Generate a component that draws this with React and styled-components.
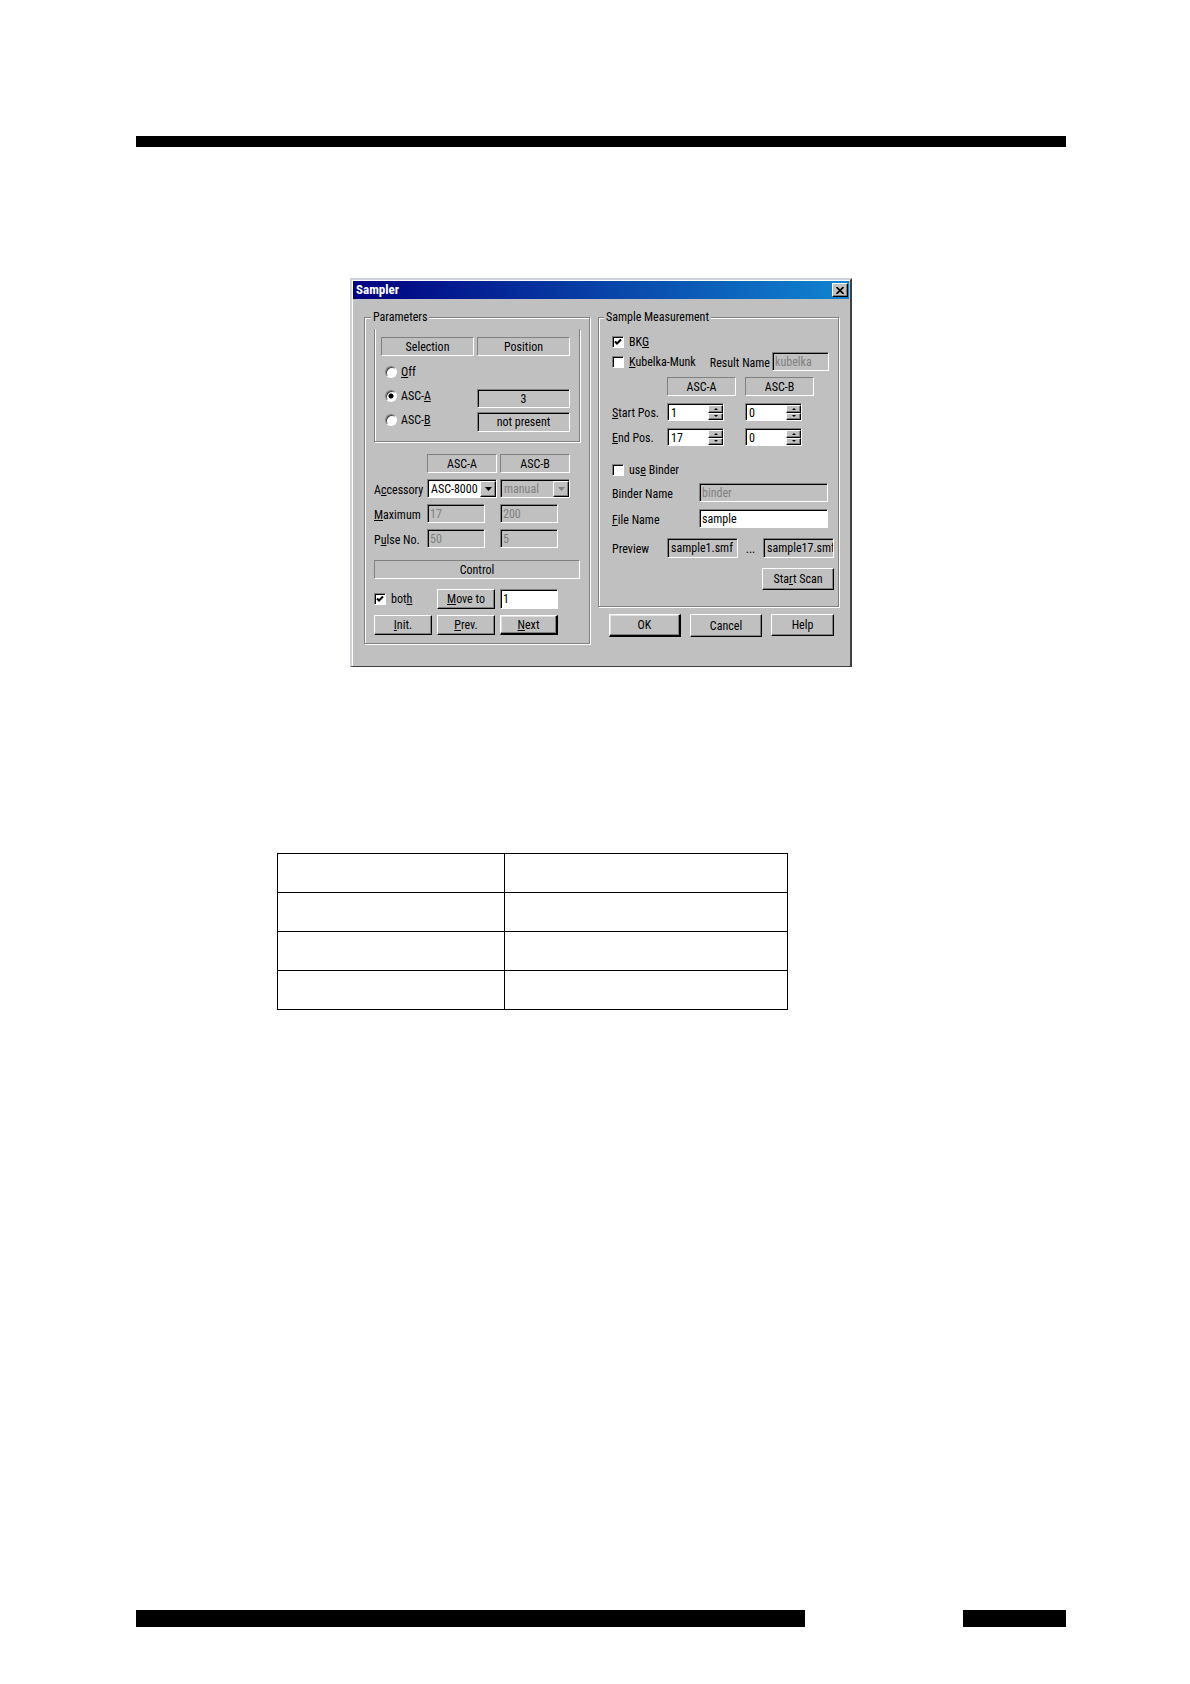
import React, { useId, useState } from "react";
import styled, { createGlobalStyle, css } from "styled-components";

const GlobalStyle = createGlobalStyle`
  *, *::before, *::after { box-sizing: border-box; }
  body { margin: 0; background: #fff; }
  button, input, select, output { font: inherit; color: inherit; margin: 0; border-radius: 0; }
`;

const face = "#c0c0c0";
const shade = "#808080";

const sunken = css`
  border: 1px solid;
  border-color: ${shade} #fff #fff ${shade};
  box-shadow: inset 1px 1px 0 #000;
`;

const raised = css`
  background: ${face};
  border: 1px solid;
  border-color: #fff #000 #000 #fff;
  box-shadow: inset -1px -1px 0 ${shade};
`;

/* ---------- page ---------- */

const Page = styled.div`
  min-height: 100vh;
  display: flex;
  flex-direction: column;
  padding: 136px 124px 57px 136px;
  background: #fff;
`;

const HeaderRule = styled.header`
  height: 11px;
  background: #000;
`;

const Content = styled.main`
  display: flex;
  flex-direction: column;
  padding: 131px 0 48px;
`;

const FooterRules = styled.footer`
  display: flex;
  gap: 158px;
  margin-top: auto;
`;

const FooterBar = styled.div`
  flex: ${(p) => (p.$short ? "0 0 103px" : "1")};
  height: 17px;
  background: #000;
`;

const Table = styled.table`
  width: 511px;
  margin: 186px 0 0 141px;
  border-collapse: collapse;
  table-layout: fixed;
`;

const Cell = styled.td`
  height: 39px;
  padding: 0;
  border: 1px solid #000;
`;

/* ---------- dialog ---------- */

const Dialog = styled.section`
  align-self: center;
  width: 502px;
  background: ${face};
  padding: 1px;
  border: solid;
  border-width: 2px 2px 1px;
  border-color: #d0d4d8 #404040 #404040 #d0d4d8;
  box-shadow: inset 1px 1px 0 #fff;
  font: 12px/14px "Liberation Sans Narrow", "Roboto Condensed", "Liberation Sans", Arial, sans-serif;
  color: #000;
`;

const TitleBar = styled.header`
  display: flex;
  align-items: center;
  justify-content: space-between;
  height: 18px;
  padding: 0 1px 0 3px;
  background: linear-gradient(90deg, #000080, #1084d0);
`;

const Title = styled.h1`
  margin: 0;
  font-size: 13px;
  line-height: 18px;
  font-weight: bold;
  color: #fff;
`;

const CloseButton = styled.button`
  ${raised}
  display: grid;
  place-items: center;
  width: 16px;
  height: 14px;
  padding: 0;
`;

const Body = styled.div`
  display: flex;
  gap: 8px;
  padding: 11px 10px 21px 11px;
`;

const LeftColumn = styled.div`
  flex: 0 0 226px;
`;

const RightColumn = styled.div`
  flex: 1;
  min-width: 0;
`;

const Group = styled.fieldset`
  min-width: 0;
  margin: 0;
  padding: ${(p) => p.$pad};
  border: 1px solid ${shade};
  box-shadow: 1px 1px 0 #fff, inset 1px 1px 0 #fff;
`;

const Legend = styled.legend`
  height: 14px;
  margin-left: ${(p) => p.$shift || 0};
  padding: 0 2px;
  background: ${face};
`;

const OpenFrame = styled.div`
  display: flex;
  gap: 3px;
  padding: 8px 9px 9px 6px;
  border: 1px solid ${shade};
  border-top: 0;
  box-shadow: 1px 1px 0 #fff, inset 1px 0 0 #fff;
`;

const FrameColumn = styled.div`
  flex: 1;
  display: flex;
  flex-direction: column;
`;

const Heading = styled.div`
  height: 19px;
  border: 1px solid;
  border-color: ${shade} #fff #fff ${shade};
  line-height: 18px;
  text-align: center;
`;

const RadioList = styled.div`
  padding: 4px 0 0 4px;
`;

const Choice = styled.label`
  display: flex;
  align-items: center;
  gap: ${(p) => p.$gap || "5px"};
  height: ${(p) => p.$height || "20px"};
`;

const Radio = styled.input`
  appearance: none;
  width: 12px;
  height: 12px;
  border: 1px solid;
  border-color: ${shade} #fff #fff ${shade};
  border-radius: 50%;
  background: #fff;
  box-shadow: inset 1px 1px 0 #404040;
  &:checked {
    background: radial-gradient(circle at 50% 50%, #000 0 2px, #fff 3px);
  }
`;

const Positions = styled.div`
  display: grid;
  gap: 4px;
  margin-top: 33px;
`;

const Readout = styled.output`
  ${sunken}
  display: block;
  height: ${(p) => p.$height || "19px"};
  padding: 0 3px;
  overflow: hidden;
  white-space: nowrap;
  line-height: 18px;
  text-align: ${(p) => p.$align || "left"};
`;

const AccessoryGrid = styled.div`
  display: grid;
  grid-template-columns: 50px 70px 70px;
  grid-auto-rows: 19px;
  column-gap: 3px;
  row-gap: 6px;
  margin: 12px 0;
`;

const Label = styled.label`
  align-self: center;
  padding-top: 2px;
  white-space: nowrap;
`;

const TextBox = styled.input`
  ${sunken}
  width: ${(p) => p.$width || "100%"};
  height: ${(p) => p.$height || "19px"};
  padding: 0 2px;
  background: #fff;
  outline: none;
  &:disabled {
    background: ${face};
    color: ${shade};
  }
`;

const SelectFrame = styled.span`
  ${sunken}
  display: flex;
  position: relative;
  height: 19px;
  background: ${(p) => (p.$disabled ? face : "#fff")};
  color: ${(p) => (p.$disabled ? shade : "#000")};
`;

const NativeSelect = styled.select`
  appearance: none;
  width: 100%;
  padding: 0 16px 0 3px;
  border: 0;
  background: transparent;
  outline: none;
  &:disabled {
    color: ${shade};
    opacity: 1;
  }
`;

const DropMark = styled.span`
  ${raised}
  position: absolute;
  top: 1px;
  right: 0;
  bottom: 0;
  display: grid;
  place-items: center;
  width: 16px;
  pointer-events: none;
`;

const ControlGrid = styled.div`
  display: grid;
  grid-template-columns: repeat(3, 58px);
  grid-auto-rows: 20px;
  gap: 6px 5px;
  margin-top: 10px;
`;

const PushButton = styled.button`
  ${raised}
  width: ${(p) => p.$width || "auto"};
  height: ${(p) => p.$height || "20px"};
  padding: 0;
  text-align: center;
  ${(p) =>
    p.$default &&
    css`
      border-width: 1px 2px 2px 1px;
      box-shadow: inset -1px -1px 0 ${shade}, inset 1px 1px 0 #e0e0e0;
    `}
`;

const TickFrame = styled.span`
  display: grid;
  place-items: center;
  > * {
    grid-area: 1 / 1;
  }
  > svg {
    visibility: hidden;
    pointer-events: none;
  }
  > input:checked + svg {
    visibility: visible;
  }
`;

const TickInput = styled.input`
  ${sunken}
  appearance: none;
  width: 12px;
  height: 12px;
  background: #fff;
`;

const ResultRow = styled.div`
  display: flex;
  align-items: center;
  justify-content: space-between;
  height: 19px;
  padding-right: 5px;
`;

const ResultField = styled.div`
  display: flex;
  gap: 2px;
`;

const PositionGrid = styled.div`
  display: grid;
  grid-template-columns: 46px 69px 69px;
  grid-template-rows: 19px 18px 18px;
  gap: 7px 9px;
  margin: 6px 0 14px;
`;

const SpinFrame = styled.div`
  ${sunken}
  display: flex;
  width: 57px;
  height: 18px;
  padding: 1px 0 0 1px;
  background: #fff;
`;

const SpinInput = styled.input`
  flex: 1;
  min-width: 0;
  padding: 0 0 0 2px;
  border: 0;
  background: transparent;
  outline: none;
`;

const SpinButtons = styled.div`
  display: grid;
  grid-template-rows: 1fr 1fr;
  width: 15px;
`;

const SpinButton = styled.button`
  ${raised}
  display: grid;
  place-items: center;
  min-height: 0;
  padding: 0;
`;

const FileGrid = styled.div`
  display: grid;
  grid-template-columns: 87px 129px;
  grid-auto-rows: 19px;
  row-gap: 7px;
  margin-top: 3px;
`;

const PreviewRow = styled.div`
  display: grid;
  grid-template-columns: 55px 71px 25px 71px;
  height: 20px;
  margin: 10px 0;
`;

const Ellipsis = styled.span`
  align-self: center;
  padding-top: 2px;
  text-align: center;
`;

const ScanRow = styled.div`
  display: flex;
  justify-content: flex-end;
`;

const DialogButtons = styled.div`
  display: flex;
  justify-content: space-between;
  padding: 7px 5px 0 11px;
`;

/* ---------- parts ---------- */

function Triangle({ up, size = 7, color = "#000" }) {
  const h = Math.ceil(size / 2);
  return (
    <svg width={size} height={h} viewBox={`0 0 ${size} ${h}`} aria-hidden="true">
      <path
        d={up ? `M0 ${h}H${size}L${size / 2} 0Z` : `M0 0H${size}L${size / 2} ${h}Z`}
        fill={color}
      />
    </svg>
  );
}

function Tick({ checked, children, gap }) {
  return (
    <Choice $gap={gap}>
      <TickFrame>
        <TickInput type="checkbox" defaultChecked={checked} />
        <svg width="8" height="8" viewBox="0 0 8 8" aria-hidden="true">
          <path d="M1 3.5L3 5.5L7 1.5" fill="none" stroke="#000" strokeWidth="2" />
        </svg>
      </TickFrame>
      <span>{children}</span>
    </Choice>
  );
}

function Combo({ id, label, value, disabled }) {
  return (
    <SelectFrame $disabled={disabled}>
      <NativeSelect id={id} aria-label={label} disabled={disabled} defaultValue={value}>
        <option>{value}</option>
      </NativeSelect>
      <DropMark>
        <Triangle color={disabled ? shade : "#000"} />
      </DropMark>
    </SelectFrame>
  );
}

function Spinner({ id, label, initial }) {
  const [value, setValue] = useState(initial);
  const step = (n) => setValue((v) => Math.max(0, (Number(v) || 0) + n));
  return (
    <SpinFrame>
      <SpinInput
        id={id}
        aria-label={label}
        value={value}
        onChange={(e) => setValue(e.target.value)}
      />
      <SpinButtons>
        <SpinButton type="button" aria-label={`${label} up`} onClick={() => step(1)}>
          <Triangle up size={4} />
        </SpinButton>
        <SpinButton type="button" aria-label={`${label} down`} onClick={() => step(-1)}>
          <Triangle size={4} />
        </SpinButton>
      </SpinButtons>
    </SpinFrame>
  );
}

function Parameters() {
  const id = useId();
  return (
    <Group $pad="5px 9px 8px">
      <Legend $shift="-3px">Parameters</Legend>
      <OpenFrame>
        <FrameColumn>
          <Heading>Selection</Heading>
          <RadioList role="radiogroup" aria-label="Selection">
            <Choice $height="24px" $gap="4px">
              <Radio type="radio" name="selection" />
              <span><u>O</u>ff</span>
            </Choice>
            <Choice $height="24px" $gap="4px">
              <Radio type="radio" name="selection" defaultChecked />
              <span>ASC-<u>A</u></span>
            </Choice>
            <Choice $height="24px" $gap="4px">
              <Radio type="radio" name="selection" />
              <span>ASC-<u>B</u></span>
            </Choice>
          </RadioList>
        </FrameColumn>
        <FrameColumn>
          <Heading>Position</Heading>
          <Positions>
            <Readout $align="center">3</Readout>
            <Readout $align="center" $height="20px">not present</Readout>
          </Positions>
        </FrameColumn>
      </OpenFrame>

      <AccessoryGrid>
        <span />
        <Heading>ASC-A</Heading>
        <Heading>ASC-B</Heading>
        <Label htmlFor={`${id}acc`}>A<u>c</u>cessory</Label>
        <Combo id={`${id}acc`} value="ASC-8000" />
        <Combo label="Accessory ASC-B" value="manual" disabled />
        <Label htmlFor={`${id}max`}><u>M</u>aximum</Label>
        <TextBox id={`${id}max`} $width="58px" defaultValue="17" disabled />
        <TextBox aria-label="Maximum ASC-B" $width="58px" defaultValue="200" disabled />
        <Label htmlFor={`${id}pulse`}>P<u>u</u>lse No.</Label>
        <TextBox id={`${id}pulse`} $width="58px" defaultValue="50" disabled />
        <TextBox aria-label="Pulse No. ASC-B" $width="58px" defaultValue="5" disabled />
      </AccessoryGrid>

      <Heading>Control</Heading>
      <ControlGrid>
        <Tick checked>bot<u>h</u></Tick>
        <PushButton type="button"><u>M</u>ove to</PushButton>
        <TextBox aria-label="Move to position" $height="20px" defaultValue="1" />
        <PushButton type="button"><u>I</u>nit.</PushButton>
        <PushButton type="button"><u>P</u>rev.</PushButton>
        <PushButton type="button" $default><u>N</u>ext</PushButton>
      </ControlGrid>
    </Group>
  );
}

function SampleMeasurement() {
  const id = useId();
  return (
    <Group $pad="8px 4px 16px 13px">
      <Legend $shift="-8px">Sample Measurement</Legend>
      <Tick checked>BK<u>G</u></Tick>
      <ResultRow>
        <Tick><u>K</u>ubelka-Munk</Tick>
        <ResultField>
          <Label htmlFor={`${id}res`}>Result Name</Label>
          <TextBox id={`${id}res`} $width="57px" defaultValue="kubelka" disabled />
        </ResultField>
      </ResultRow>

      <PositionGrid>
        <span />
        <Heading>ASC-A</Heading>
        <Heading>ASC-B</Heading>
        <Label htmlFor={`${id}start`}><u>S</u>tart Pos.</Label>
        <Spinner id={`${id}start`} label="Start Pos. ASC-A" initial="1" />
        <Spinner label="Start Pos. ASC-B" initial="0" />
        <Label htmlFor={`${id}end`}><u>E</u>nd Pos.</Label>
        <Spinner id={`${id}end`} label="End Pos. ASC-A" initial="17" />
        <Spinner label="End Pos. ASC-B" initial="0" />
      </PositionGrid>

      <Tick>us<u>e</u> Binder</Tick>
      <FileGrid>
        <Label htmlFor={`${id}binder`}>Binder Name</Label>
        <TextBox id={`${id}binder`} defaultValue="binder" disabled />
        <Label htmlFor={`${id}file`}><u>F</u>ile Name</Label>
        <TextBox id={`${id}file`} defaultValue="sample" />
      </FileGrid>
      <PreviewRow>
        <Label htmlFor={`${id}preview`}>Preview</Label>
        <Readout id={`${id}preview`} $height="20px">sample1.smf</Readout>
        <Ellipsis>...</Ellipsis>
        <Readout $height="20px">sample17.smf</Readout>
      </PreviewRow>
      <ScanRow>
        <PushButton type="button" $width="72px" $height="22px">Sta<u>r</u>t Scan</PushButton>
      </ScanRow>
    </Group>
  );
}

function SamplerDialog() {
  return (
    <Dialog role="dialog" aria-label="Sampler">
      <TitleBar>
        <Title>Sampler</Title>
        <CloseButton type="button" aria-label="Close">
          <svg width="8" height="7" viewBox="0 0 8 7" aria-hidden="true">
            <path d="M0.5 0L7.5 7M7.5 0L0.5 7" stroke="#000" strokeWidth="1.6" />
          </svg>
        </CloseButton>
      </TitleBar>
      <Body>
        <LeftColumn>
          <Parameters />
        </LeftColumn>
        <RightColumn>
          <SampleMeasurement />
          <DialogButtons>
            <PushButton type="button" $default $width="72px" $height="23px">OK</PushButton>
            <PushButton type="button" $width="72px" $height="23px">Cancel</PushButton>
            <PushButton type="button" $width="63px" $height="22px">Help</PushButton>
          </DialogButtons>
        </RightColumn>
      </Body>
    </Dialog>
  );
}

export default function App() {
  return (
    <>
      <GlobalStyle />
      <Page>
        <HeaderRule />
        <Content>
          <SamplerDialog />
          <Table>
            <colgroup>
              <col width="227" />
              <col width="283" />
            </colgroup>
            <tbody>
              {[0, 1, 2, 3].map((row) => (
                <tr key={row}>
                  <Cell />
                  <Cell />
                </tr>
              ))}
            </tbody>
          </Table>
        </Content>
        <FooterRules>
          <FooterBar />
          <FooterBar $short />
        </FooterRules>
      </Page>
    </>
  );
}
